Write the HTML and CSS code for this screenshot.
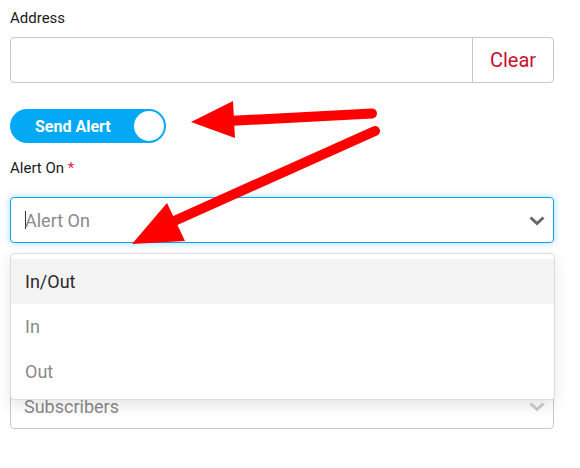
FILE: index.html
```html
<!DOCTYPE html>
<html>
<head>
<meta charset="utf-8">
<link rel="stylesheet" href="styles.css">
</head>
<body>
<div class="page">
  <div class="field">
    <label class="label">Address</label>
    <div class="input-group">
      <div class="input"></div>
      <div class="addon">Clear</div>
    </div>
  </div>

  <div class="toggle">
    <span class="toggle-text">Send Alert</span>
    <span class="knob"></span>
  </div>

  <div class="field field-alert">
    <label class="label">Alert On <span class="req">*</span></label>
    <div class="select-wrap">
      <div class="select focused">
        <span class="caret"></span><span class="placeholder">Alert On</span>
        <svg class="chev" width="16" height="10" viewBox="0 0 16 10"><path d="M1.5 1.5 L8 7.5 L14.5 1.5" fill="none" stroke="#666" stroke-width="3"/></svg>
      </div>
      <ul class="menu">
        <li class="opt active">In/Out</li>
        <li class="opt">In</li>
        <li class="opt">Out</li>
      </ul>
    </div>
  </div>

  <div class="field field-subs">
    <div class="select">
      <span class="placeholder">Subscribers</span>
      <svg class="chev" width="16" height="10" viewBox="0 0 16 10"><path d="M1.5 1.5 L8 7.5 L14.5 1.5" fill="none" stroke="#ccc" stroke-width="3"/></svg>
    </div>
  </div>

  <svg class="arrows" width="580" height="468" viewBox="0 0 580 468">
    <path d="M372 113.5 L228 121" stroke="#ff0000" stroke-width="10" stroke-linecap="round" fill="none"/>
    <polygon points="191,122 233,101 235,138" fill="#ff0000"/>
    <path d="M375 131 L172 222" stroke="#ff0000" stroke-width="10" stroke-linecap="round" fill="none"/>
    <polygon points="132,244 167,203 185,241" fill="#ff0000"/>
  </svg>
</div>
</body>
</html>
```
FILE: styles.css
```css
* { box-sizing: border-box; }
html, body { margin: 0; padding: 0; background: #fff; }
body { font-family: Roboto, "Noto Sans", Arial, sans-serif; color: #212121; }

.page {
  position: relative;
  width: 580px;
  height: 468px;
  padding: 8px 26px 0 10px;
  overflow: hidden;
}

.label {
  display: block;
  font-size: 15px;
  line-height: 20px;
  color: #1a1a1a;
  margin-bottom: 9px;
}
.req { color: #e8213a; }

.input-group {
  display: flex;
  height: 46px;
  border: 1px solid #c8c8c8;
  border-radius: 4px;
}
.input { flex: 1; }
.addon {
  width: 81px;
  border-left: 1px solid #c8c8c8;
  display: flex;
  align-items: center;
  justify-content: center;
  color: #c8102e;
  font-size: 20px;
}

.toggle {
  margin-top: 26px;
  width: 156px;
  height: 34px;
  border-radius: 17px;
  background: #03a9f4;
  display: flex;
  align-items: center;
  justify-content: space-between;
  padding: 0 2px 0 25px;
}
.toggle-text {
  color: #fff;
  font-weight: 700;
  font-size: 16px;
}
.knob {
  width: 30px;
  height: 30px;
  border-radius: 50%;
  background: #fff;
}

.field-alert { margin-top: 15px; }
.field-alert .label { margin-bottom: 19px; }

.select-wrap { position: relative; }
.select {
  height: 46px;
  border: 1px solid #c8c8c8;
  border-radius: 4px;
  display: flex;
  align-items: center;
  padding: 0 8px 0 14px;
  font-size: 18px;
}
.select.focused {
  border-color: #1a9ee6;
  box-shadow: 0 0 6px 1px rgba(3, 169, 244, 0.3);
}
.caret {
  width: 1px;
  height: 18px;
  background: #333;
  margin-right: -1px;
}
.placeholder { color: #8a8a8a; flex: 1; }
.chev { margin-top: 1px; }

.menu {
  position: absolute;
  left: 0;
  right: -1px;
  top: 56px;
  margin: 0;
  padding: 5px 0;
  list-style: none;
  background: #fff;
  border: 1px solid #dcdcdc;
  border-radius: 4px;
  box-shadow: 0 6px 14px rgba(0, 0, 0, 0.1);
  z-index: 2;
}
.opt {
  height: 45px;
  display: flex;
  align-items: center;
  padding-left: 14px;
  font-size: 18px;
  color: #8a8a8a;
}
.opt.active {
  background: #f3f3f3;
  color: #2a2a2a;
}

.field-subs { margin-top: 140px; }
.field-subs .select { padding-left: 13px; }

.arrows {
  position: absolute;
  left: 0;
  top: 0;
  z-index: 5;
  pointer-events: none;
}
```
